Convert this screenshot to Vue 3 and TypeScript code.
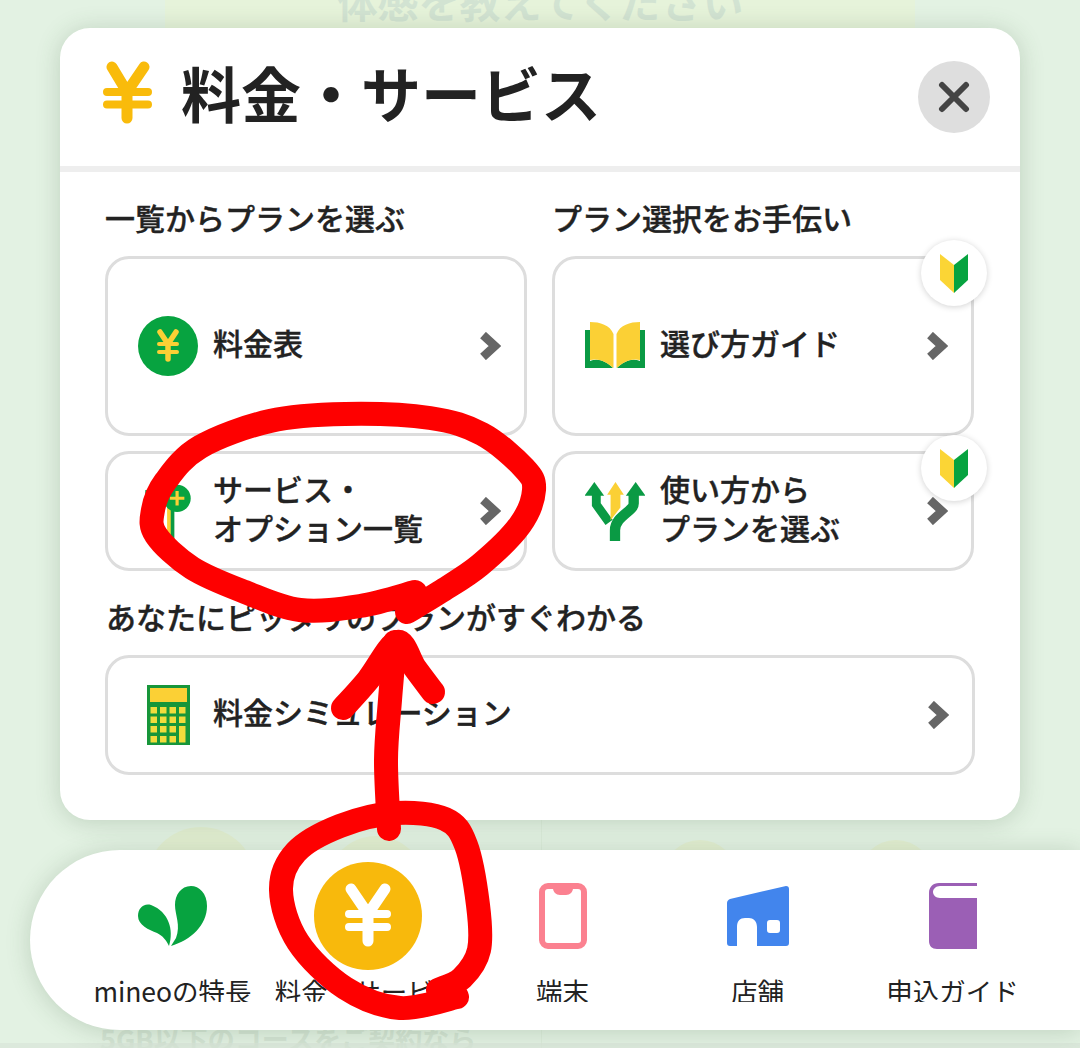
<script setup lang="ts">
type Pt = [number, number]

// hand-drawn marks over the screenshot, smoothed through these points
const loopTop: Pt[] = [[415, 592], [360, 606], [300, 610], [245, 592], [192, 568], [156, 535], [153, 510], [165, 482], [200, 447], [270, 421], [345, 414], [430, 418], [482, 434], [524, 468], [534, 490], [520, 525], [480, 565], [440, 592], [407, 612]]
const loopBottom: Pt[] = [[457, 997], [400, 1008], [345, 988], [298, 942], [281, 890], [296, 852], [340, 826], [395, 813], [445, 819], [466, 845], [478, 905], [479, 950], [462, 978], [438, 990]]
const shaft: Pt[] = [[389, 829], [386, 760], [390, 700], [395, 642]]
const head: Pt[] = [[343, 708], [368, 680], [397, 642], [415, 668], [433, 692]]

function smooth(p: Pt[]) {
  let d = `M${p[0][0]} ${p[0][1]}`
  for (let i = 0; i < p.length - 1; i++) {
    const a = p[Math.max(i - 1, 0)]
    const b = p[i]
    const c = p[i + 1]
    const e = p[Math.min(i + 2, p.length - 1)]
    d += ` C${b[0] + (c[0] - a[0]) / 6} ${b[1] + (c[1] - a[1]) / 6} ${c[0] - (e[0] - b[0]) / 6} ${c[1] - (e[1] - b[1]) / 6} ${c[0]} ${c[1]}`
  }
  return d
}

const marks = [loopTop, loopBottom, shaft, head].map(smooth)

const calcKeys = [707, 716.5, 726, 736].flatMap((y, row) =>
  [150.5, 160, 169.5, 179].map((x, col) => ({
    x,
    y,
    h: col === 3 && row === 2 ? 16.5 : 6.5,
    skip: col === 3 && row === 3,
  })),
).filter((k) => !k.skip)
</script>

<template>
  <div class="page">
    <div class="backdrop">
      <div class="bg-banner">体感を教えてください</div>
      <div class="bg-line" />
      <div class="bg-blob blob-a" />
      <div class="bg-blob blob-b" />
      <div class="bg-blob blob-c" />
      <div class="bg-blob blob-d" />
      <div class="bg-note">5GB以下のコースをご契約なら</div>
      <div class="bg-foot" />
    </div>

    <section class="panel">
      <header class="panel-head">
        <svg class="head-yen" viewBox="102 60 50 64">
          <path d="M112 67 127 92 144 67M127 92V118" fill="none" stroke="#f9bb0b" stroke-width="11" stroke-linecap="round" stroke-linejoin="round" />
          <path d="M107 92H148M107 104.500H148" fill="none" stroke="#f9bb0b" stroke-width="8" stroke-linecap="round" />
        </svg>
        <h1 class="panel-title">料金・サービス</h1>
        <button class="close-btn" type="button" aria-label="閉じる">
          <svg viewBox="0 0 32 32" width="32" height="32">
            <path d="M4 4 28 28M28 4 4 28" stroke="#444" stroke-width="6" stroke-linecap="round" />
          </svg>
        </button>
      </header>

      <div class="panel-body">
        <div class="plan-grid">
          <h2 class="group-title">一覧からプランを選ぶ</h2>
          <h2 class="group-title">プラン選択をお手伝い</h2>

          <a class="link-card">
            <svg class="card-icon" viewBox="0 0 60 60">
              <circle cx="30" cy="30" r="30" fill="#07a340" />
              <path d="M22 16 30 28 38 16M30 28V43" fill="none" stroke="#fbd035" stroke-width="5.500" stroke-linecap="round" stroke-linejoin="round" />
              <path d="M21 28H39M21 36H39" fill="none" stroke="#fbd035" stroke-width="4" stroke-linecap="round" />
            </svg>
            <span class="card-text">料金表</span>
            <svg class="chev" viewBox="0 0 22 28"><path d="M4 3 16 14 4 25" fill="none" stroke="#666" stroke-width="8.500" /></svg>
          </a>

          <a class="link-card">
            <svg class="card-icon" viewBox="585 322 60 48">
              <path d="M585 330H590V361C598 358 606 361 613 368H585Z" fill="#0a9a44" />
              <path d="M645 330H640V361C632 358 624 361 617 368H645Z" fill="#0a9a44" />
              <path d="M590 322C600 322 610 325 613.500 334V368C606 361 598 358 590 360Z" fill="#fbd035" />
              <path d="M640 322C630 322 620 325 616.500 334V368C624 361 632 358 640 360Z" fill="#fbd035" />
            </svg>
            <span class="card-text">選び方ガイド</span>
            <svg class="chev" viewBox="0 0 22 28"><path d="M4 3 16 14 4 25" fill="none" stroke="#666" stroke-width="8.500" /></svg>
            <span class="beginner">
              <svg viewBox="0 0 28 40" width="28" height="40">
                <path d="M14 12 0 1V27L14 40Z" fill="#fbd535" />
                <path d="M14 12 28 1V27L14 40Z" fill="#07a340" />
              </svg>
            </span>
          </a>

          <a class="link-card">
            <svg class="card-icon" viewBox="138 478 60 66">
              <rect x="143" y="488" width="32" height="54" fill="#0a9a44" />
              <rect x="147" y="492" width="24" height="46" fill="#fbd035" />
              <rect x="151" y="496" width="16" height="38" fill="#fff" />
              <circle cx="178" cy="497" r="15" fill="#07a340" />
              <path d="M178 489V505M170 497H186" stroke="#fbd035" stroke-width="3.500" />
            </svg>
            <span class="card-text">サービス・<br />オプション一覧</span>
            <svg class="chev" viewBox="0 0 22 28"><path d="M4 3 16 14 4 25" fill="none" stroke="#666" stroke-width="8.500" /></svg>
          </a>

          <a class="link-card">
            <svg class="card-icon" viewBox="585 480 60 61">
              <path d="M594 481 604 495H584Z" fill="#0a9a44" />
              <path d="M636 481 646 495H626Z" fill="#0a9a44" />
              <path d="M596 494V504L609 522" fill="none" stroke="#0a9a44" stroke-width="9" />
              <path d="M634 494V503C634 511 615 516 615 530V541" fill="none" stroke="#0a9a44" stroke-width="10.500" />
              <path d="M615.500 481 624 494H620.500V507L610.500 520V494H607Z" fill="#fbd035" />
            </svg>
            <span class="card-text">使い方から<br />プランを選ぶ</span>
            <svg class="chev" viewBox="0 0 22 28"><path d="M4 3 16 14 4 25" fill="none" stroke="#666" stroke-width="8.500" /></svg>
            <span class="beginner">
              <svg viewBox="0 0 28 40" width="28" height="40">
                <path d="M14 12 0 1V27L14 40Z" fill="#fbd535" />
                <path d="M14 12 28 1V27L14 40Z" fill="#07a340" />
              </svg>
            </span>
          </a>
        </div>

        <h2 class="group-title sim-title">あなたにピッタリのプランがすぐわかる</h2>
        <a class="link-card sim-card">
          <svg class="card-icon" viewBox="138 685 60 60">
            <rect x="147" y="685" width="43" height="60" fill="#17963a" />
            <rect x="150" y="688" width="37" height="14" fill="#fbd035" />
            <rect v-for="k in calcKeys" :key="`${k.x}-${k.y}`" :x="k.x" :y="k.y" width="6.500" :height="k.h" fill="#f2dc3c" />
          </svg>
          <span class="card-text">料金シミュレーション</span>
          <svg class="chev" viewBox="0 0 22 28"><path d="M4 3 16 14 4 25" fill="none" stroke="#666" stroke-width="8.500" /></svg>
        </a>
      </div>
    </section>

    <nav class="bottom-nav">
      <a class="nav-item">
        <svg class="nav-icon" viewBox="137 886 69 60" width="69" height="60">
          <path d="M170 946C190 940 206 925 206 906 206 893 198 886 190 886 180 886 174 895 174 905 174 915 180 925 175 938Z" fill="#07a340" />
          <path d="M168 946C173 930 168 912 150 905 142 903 137 909 137 916 137 925 148 930 156 933 162 936 165 940 168 946Z" fill="#07a340" />
        </svg>
        <span class="nav-label">mineoの特長</span>
      </a>
      <a class="nav-item">
        <svg class="nav-icon" viewBox="0 0 108 108" width="108" height="108">
          <circle cx="54" cy="54" r="54" fill="#f8b90c" />
          <path d="M37 27 54 52 71 27M54 52V79" fill="none" stroke="#fff" stroke-width="11" stroke-linecap="round" stroke-linejoin="round" />
          <path d="M35 52H73M35 65H73" fill="none" stroke="#fff" stroke-width="8" stroke-linecap="round" />
        </svg>
        <span class="nav-label">料金・サービス</span>
      </a>
      <a class="nav-item">
        <svg class="nav-icon" viewBox="0 0 48 66" width="48" height="66">
          <rect x="3" y="3" width="42" height="60" rx="6" fill="none" stroke="#fb8190" stroke-width="6" />
          <path d="M14 3H34V5C34 9 31 12 27 12H21C17 12 14 9 14 5Z" fill="#fb8190" />
        </svg>
        <span class="nav-label">端末</span>
      </a>
      <a class="nav-item">
        <svg class="nav-icon" viewBox="727 886 62 60" width="62" height="60">
          <path d="M730 899 786 886C788 886 789 887 789 889V943C789 945 788 946 786 946H757V927C757 921 753 918 749 918H745C740 918 737 921 737 927V946H730C728 946 727 945 727 943V903C727 901 728 900 730 899ZM770 920C768 920 767 921 767 923V930C767 932 768 933 770 933H777C779 933 780 932 780 930V923C780 921 779 920 777 920Z" fill="#4285ed" fill-rule="evenodd" />
        </svg>
        <span class="nav-label">店舗</span>
      </a>
      <a class="nav-item">
        <svg class="nav-icon" viewBox="0 0 48 66" width="48" height="66">
          <path d="M48 0V3H11C7 3 4 6 4 9 4 12 7 15 11 15H48V66H8C3 66 0 63 0 58V10C0 4 4 0 10 0Z" fill="#9b5fb5" />
        </svg>
        <span class="nav-label">申込ガイド</span>
      </a>
    </nav>

    <svg class="scribble" viewBox="0 0 1080 1048">
      <path v-for="(d, i) in marks" :key="i" :d="d" fill="none" stroke="#fe0000" stroke-width="24" stroke-linecap="round" stroke-linejoin="round" />
    </svg>
  </div>
</template>

<style scoped>
.page {
  position: relative;
  width: 1080px;
  height: 1048px;
  overflow: hidden;
  padding-top: 28px;
  box-sizing: border-box;
  background: #e3f2e3;
  color: #222;
  font-family: "Noto Sans CJK JP", "Noto Sans", sans-serif;
}

.backdrop {
  position: absolute;
  inset: 0;
}

.bg-banner {
  position: absolute;
  left: 165px;
  top: -24px;
  width: 750px;
  height: 52px;
  background: #e6f3da;
  color: #d2e3d2;
  font-size: 41px;
  font-weight: 700;
  line-height: 48px;
  text-align: center;
}

.bg-line {
  position: absolute;
  left: 541px;
  top: 820px;
  bottom: 0;
  width: 1px;
  background: #dcecdb;
}

.bg-blob {
  position: absolute;
  border-radius: 50%;
  background: #e3efd2;
}

.blob-a { left: 146px; top: 827px; width: 110px; height: 110px; }
.blob-b { left: 327px; top: 836px; width: 98px; height: 98px; }
.blob-c { left: 663px; top: 840px; width: 74px; height: 74px; }
.blob-d { left: 859px; top: 840px; width: 74px; height: 74px; }

.bg-note {
  position: absolute;
  left: 100px;
  top: 1021px;
  color: #d4e4d4;
  font-size: 27px;
  font-weight: 700;
  line-height: 36px;
  white-space: nowrap;
}

.bg-foot {
  position: absolute;
  left: 0;
  right: 0;
  bottom: 0;
  height: 5px;
  background: #d9e6d8;
  opacity: 0.7;
}

.panel {
  position: relative;
  width: 960px;
  height: 792px;
  margin-left: 60px;
  background: #fff;
  border-radius: 30px;
  box-shadow: 0 2px 24px rgba(60, 90, 60, 0.22);
}

.panel-head {
  display: flex;
  align-items: center;
  height: 138px;
  padding: 0 30px 0 42px;
  border-bottom: 6px solid #eee;
}

.head-yen {
  width: 50px;
  height: 64px;
  margin-top: -10px;
}

.panel-title {
  flex: 1;
  margin: -10px 0 0 29px;
  font-size: 60px;
  font-weight: 700;
  line-height: 80px;
  white-space: nowrap;
}

.close-btn {
  display: flex;
  align-items: center;
  justify-content: center;
  width: 72px;
  height: 72px;
  padding: 0;
  border: 0;
  border-radius: 50%;
  background: #dedede;
}

.panel-body {
  padding: 27px 45px 0;
}

.plan-grid {
  display: grid;
  grid-template-columns: 422px 422px;
  grid-template-rows: 42px 180px 120px;
  column-gap: 25px;
  row-gap: 15px;
}

.group-title {
  margin: 0;
  font-size: 30px;
  font-weight: 500;
  line-height: 36px;
  white-space: nowrap;
  -webkit-text-stroke: 0.4px #222;
}

.sim-title {
  margin: 27px 0 21px 1px;
}

.link-card {
  position: relative;
  display: flex;
  align-items: center;
  box-sizing: border-box;
  padding: 0 23px 0 30px;
  background: #fff;
  border: 3px solid #ddd;
  border-radius: 24px;
}

.sim-card {
  height: 120px;
}

.card-icon {
  flex: none;
  width: 60px;
  height: 60px;
}

.card-text {
  flex: 1;
  margin-left: 15px;
  padding-bottom: 7px;
  font-size: 30px;
  font-weight: 500;
  line-height: 39px;
  white-space: nowrap;
  -webkit-text-stroke: 0.4px #222;
}

.chev {
  flex: none;
  width: 22px;
  height: 28px;
}

.beginner {
  position: absolute;
  top: -19px;
  right: -16px;
  display: flex;
  align-items: center;
  justify-content: center;
  width: 66px;
  height: 66px;
  border-radius: 50%;
  background: #fff;
  box-shadow: 0 1px 6px rgba(0, 0, 0, 0.18);
}

.bottom-nav {
  position: relative;
  display: flex;
  height: 180px;
  margin: 30px 0 0 30px;
  padding-left: 45px;
  background: #fff;
  border-radius: 90px 0 0 90px;
  box-shadow: 0 2px 24px rgba(60, 90, 60, 0.22);
}

.nav-item {
  flex: none;
  display: flex;
  flex-direction: column;
  align-items: center;
  width: 195px;
}

.nav-icon {
  height: 108px;
  margin-top: 12px;
}

.nav-label {
  height: 29px;
  margin-top: 3px;
  overflow: hidden;
  font-size: 26.500px;
  line-height: 36px;
  white-space: nowrap;
}

.scribble {
  position: absolute;
  inset: 0;
  width: 1080px;
  height: 1048px;
  pointer-events: none;
}
</style>
